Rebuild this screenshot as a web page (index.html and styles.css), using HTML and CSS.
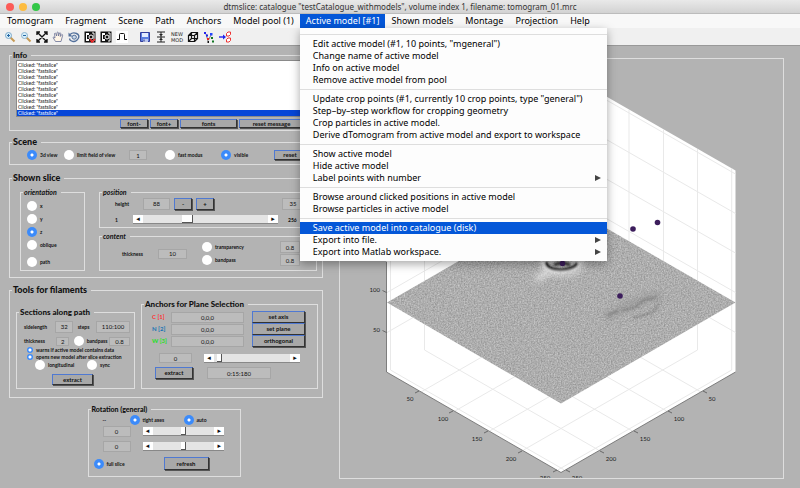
FILE: index.html
```html
<!DOCTYPE html>
<html lang="en">
<head>
<meta charset="utf-8">
<title>dtmslice</title>
<link rel="stylesheet" href="styles.css">
</head>
<body>
<header class="titlebar">
  <span class="lights"><i class="close"></i><i class="minimise"></i><i class="expand"></i></span>
  <h1>dtmslice: catalogue "testCatalogue_withmodels", volume index 1, filename: tomogram_01.mrc</h1>
</header>

<nav class="menubar">
  <button type="button">Tomogram</button>
  <button type="button">Fragment</button>
  <button type="button">Scene</button>
  <button type="button">Path</button>
  <button type="button">Anchors</button>
  <button type="button">Model pool (1)</button>
  <div class="open">
    <button type="button" class="active">Active model [#1]</button>
    <div class="dropdown">
      <hr>
      <button type="button">Edit active model (#1, 10 points, "mgeneral")</button>
      <button type="button">Change name of active model</button>
      <button type="button">Info on active model</button>
      <button type="button">Remove active model from pool</button>
      <hr>
      <button type="button">Update crop points (#1, currently 10 crop points, type "general")</button>
      <button type="button">Step–by–step workflow for cropping geometry</button>
      <button type="button">Crop particles in active model.</button>
      <button type="button">Derive dTomogram from active model and export to workspace</button>
      <hr>
      <button type="button">Show active model</button>
      <button type="button">Hide active model</button>
      <button type="button" class="sub">Label points with number</button>
      <hr>
      <button type="button">Browse around clicked positions in active model</button>
      <button type="button">Browse particles in active model</button>
      <hr>
      <button type="button" class="active">Save active model into catalogue (disk)</button>
      <button type="button" class="sub">Export into file.</button>
      <button type="button" class="sub">Export into Matlab workspace.</button>
    </div>
  </div>
  <button type="button">Shown models</button>
  <button type="button">Montage</button>
  <button type="button">Projection</button>
  <button type="button">Help</button>
</nav>

<div class="toolbar">
  <button type="button" aria-label="Zoom in"><svg viewBox="0 0 12 12"><path d="M6.5 6.5L10.5 10.5" stroke="#c79a54" stroke-width="2"/><circle cx="4.5" cy="4.5" r="3" fill="#d8effa" stroke="#7fa9c9"/><path d="M3 4.5h3M4.500 3v3" stroke="#2568a5"/></svg></button>
  <button type="button" aria-label="Zoom out"><svg viewBox="0 0 12 12"><path d="M6.500 6.500L10.500 10.500" stroke="#c79a54" stroke-width="2"/><circle cx="4.500" cy="4.500" r="3" fill="#d8effa" stroke="#8eb5d0"/><path d="M3 4.500h3" stroke="#2568a5"/></svg></button>
  <button type="button" aria-label="Fit"><svg viewBox="0 0 12 12"><path d="M1 4V1h3M8 1h3v3M11 8v3H8M4 11H1V8M1 1l10 10M11 1L1 11" stroke="#111" stroke-width="1.400"/></svg></button>
  <button type="button" aria-label="Pan"><svg viewBox="0 0 12 12"><path d="M3.500 10.500L1 6.500q.5-1 2 .5L2.500 2.500q.8-.8 1.300 0l.8 2.500L5 1.500q.8-.8 1.300 0L6.500 5l1-3q.8-.7 1.200.2L8.300 5.500l1.500-2q1 0 .8 1L9 10.500z" fill="#fff5e6" stroke="#666f95" stroke-width=".8"/></svg></button>
  <button type="button" aria-label="Rotate"><svg viewBox="0 0 12 12"><path d="M2 3.500Q5 .8 8.500 2.500t1.700 5Q8 11.300 4.500 10.300T2 7.500" stroke="#52709b" stroke-width="1.400"/><path d="M.5 1.500v4h4z" fill="#52709b"/><ellipse cx="6.200" cy="6.200" rx="2.200" ry="2" fill="#c9d7e7" stroke="#52709b"/></svg></button>
  <button type="button" aria-label="Record slice"><svg viewBox="0 0 12 12"><rect x=".5" y=".5" width="11" height="11" fill="#111"/><path d="M2 2v8h3V8H3V4h2V2z" fill="#fff"/><circle cx="7" cy="6" r="2" fill="#111" stroke="#fff"/><path d="M8 2h2v8H8" stroke="#fff"/><path d="M6 8l2 3 3-3" stroke="#e22" stroke-width="1.500"/></svg></button>
  <button type="button" aria-label="Show slice"><svg viewBox="0 0 12 12"><rect x=".5" y=".5" width="11" height="11" fill="#111"/><path d="M2 2v8h3V8H3V4h2V2z" fill="#fff"/><circle cx="7" cy="6" r="2" fill="#111" stroke="#fff"/><path d="M8 2h2v8H8" stroke="#fff"/></svg></button>
  <button type="button" aria-label="Filter"><svg viewBox="0 0 12 12"><path d="M0 0h12v12H0z" fill="#fff"/><path d="M1 8.500h2.500v-5q0-1 1-1h3q1 0 1 1v5H11" stroke="#111"/></svg></button>
  <button type="button" class="apart" aria-label="Save"><svg viewBox="0 0 12 12"><path d="M1.500 1.500h9v9h-9z" fill="#5c7fe0" stroke="#333d9a"/><path d="M3 2h6v4H3z" fill="#e4edff"/><path d="M4 8h5v3H4z" fill="#bcc7ee"/><path d="M5 8.500v2" stroke="#26307d"/></svg></button>
  <button type="button" aria-label="Compress height"><svg viewBox="0 0 12 12"><path d="M2 1h8M2 6h8M2 11h8M6 1v10" stroke="#222"/><path d="M4 3l2 2 2-2zM4 9l2-2 2 2z" fill="#222"/></svg></button>
  <button type="button" class="words">NEW<br>MOD</button>
  <button type="button" aria-label="Box"><svg viewBox="0 0 12 12"><path d="M1.500 4.500h6v6h-6zM4.500 1.500h6v6h-6zM1.500 4.500l3-3M7.500 4.500l3-3M7.500 10.500l3-3M1.500 10.500l3-3" stroke="#111" stroke-width="1.200"/></svg></button>
  <button type="button" aria-label="Points"><svg viewBox="0 0 12 12"><path d="M3 3l2 7M8 4L5.500 9" stroke="#777"/><path d="M1 1h2v2H1zM3 3.500h2v2H3z" fill="#22e"/><path d="M7 2h2.500v2.500H7z" fill="#24f"/><path d="M4 7h2v2H4z" fill="#e22"/><path d="M8 6h2v2H8zM9 9.500h2v2H9z" fill="#172"/><path d="M4.500 10h1.500v2H4.500z" fill="#111"/></svg></button>
  <button type="button" aria-label="Send to boxes"><svg viewBox="0 0 12 12"><path d="M0 6h5" stroke="#22e" stroke-width="1.400"/><path d="M4 3.500L7 6 4 8.500z" fill="#22e"/><path d="M7.500 2.500l1.500-1.500h2.500v2.500L10 5H7.500zM7.500 8.500L9 7h2.500v2.500L10 11H7.500z" fill="#fff" stroke="#e33"/></svg></button>
</div>

<main>
  <div class="controls">
    <fieldset class="info">
      <legend class="medium">Info</legend>
      <select size="9" aria-label="Messages">
        <option>Clicked: "fastslice"</option><option>Clicked: "fastslice"</option><option>Clicked: "fastslice"</option>
        <option>Clicked: "fastslice"</option><option>Clicked: "fastslice"</option><option>Clicked: "fastslice"</option>
        <option>Clicked: "fastslice"</option><option>Clicked: "fastslice"</option><option class="current">Clicked: "fastslice"</option>
      </select>
      <div class="message-actions">
        <button type="button" class="btn">font-</button>
        <button type="button" class="btn">font+</button>
        <button type="button" class="btn">fonts</button>
        <button type="button" class="btn">reset message</button>
      </div>
    </fieldset>

    <fieldset class="scene">
      <legend>Scene</legend>
      <div class="scene-row">
        <label class="pick"><input type="radio" checked>3d view</label>
        <label class="pick"><input type="radio">limit field of view</label>
        <input type="text" class="field" value="1" aria-label="Field of view">
        <label class="pick"><input type="radio">fast modus</label>
        <label class="pick"><input type="radio" checked>visible</label>
        <button type="button" class="btn">reset</button>
      </div>
    </fieldset>

    <fieldset class="slice">
      <legend>Shown slice</legend>
      <div class="slice-grid">
        <fieldset class="orientation">
          <legend class="minor">orientation</legend>
          <label class="pick"><input type="radio" name="axis">x</label>
          <label class="pick"><input type="radio" name="axis">y</label>
          <label class="pick"><input type="radio" name="axis" checked>z</label>
          <label class="pick"><input type="radio" name="axis">oblique</label>
          <label class="pick path"><input type="radio" name="axis">path</label>
        </fieldset>
        <div class="stack">
          <fieldset class="position">
            <legend class="minor">position</legend>
            <div class="height-row">
              <label for="height">height</label>
              <input type="text" class="field" id="height" value="88">
              <button type="button" class="btn">-</button>
              <button type="button" class="btn">+</button>
              <input type="text" class="field" value="35" aria-label="Step">
            </div>
            <div class="range-row">
              <span>1</span>
              <div class="slider"><button type="button" aria-label="Lower">◂</button><input type="range" class="wide" min="0" max="256" value="88" aria-label="Height"><button type="button" aria-label="Higher">▸</button></div>
              <span>256</span>
            </div>
          </fieldset>
          <fieldset class="content">
            <legend class="minor">content</legend>
            <div class="content-row">
              <label for="thick">thickness</label>
              <input type="text" class="field" id="thick" value="10">
              <div class="pair">
                <label class="pick"><input type="radio">transparency</label>
                <label class="pick"><input type="radio">bandpass</label>
              </div>
              <div class="pair">
                <input type="text" class="field" value="0.8" aria-label="Transparency">
                <input type="text" class="field" value="0.8" aria-label="Bandpass">
              </div>
            </div>
          </fieldset>
        </div>
      </div>
    </fieldset>

    <fieldset class="tools">
      <legend>Tools for filaments</legend>
      <div class="tools-grid">
        <fieldset class="sections">
          <legend class="medium">Sections along path</legend>
          <div class="side-row">
            <label for="side">sidelength</label><input type="text" class="field" id="side" value="32">
            <label for="steps">steps</label><input type="text" class="field" id="steps" value="110:100">
          </div>
          <div class="thick-row">
            <label for="pthick">thickness</label><input type="text" class="field" id="pthick" value="2">
            <label class="pick"><input type="radio">bandpass</label><input type="text" class="field" value="0.8" aria-label="Path bandpass">
          </div>
          <label class="pick small"><input type="radio" checked>warns if active model contains data</label>
          <label class="pick small"><input type="radio" checked>opens new model after slice extraction</label>
          <div class="mode-row">
            <label class="pick"><input type="radio">longitudinal</label>
            <label class="pick"><input type="radio">sync</label>
          </div>
          <button type="button" class="btn extract">extract</button>
        </fieldset>
        <fieldset class="anchors">
          <legend class="medium">Anchors for Plane Selection</legend>
          <div class="anchor-row"><label class="red" for="c1">C [1]</label><input type="text" class="field" id="c1" value="0,0,0"><button type="button" class="btn">set axis</button></div>
          <div class="anchor-row"><label class="blue" for="n2">N [2]</label><input type="text" class="field" id="n2" value="0,0,0"><button type="button" class="btn">set plane</button></div>
          <div class="anchor-row"><label class="green" for="w3">W [3]</label><input type="text" class="field" id="w3" value="0,0,0"><button type="button" class="btn">orthogonal</button></div>
          <div class="offset-row">
            <input type="text" class="field" value="0" aria-label="Offset">
            <div class="slider"><button type="button" aria-label="Lower">◂</button><input type="range" value="4" aria-label="Offset position"><button type="button" aria-label="Higher">▸</button></div>
          </div>
          <div class="extract-row">
            <button type="button" class="btn">extract</button>
            <input type="text" class="field" value="0:15:180" aria-label="Angles">
          </div>
        </fieldset>
      </div>
    </fieldset>

    <fieldset class="rotation">
      <legend class="title">Rotation (general)</legend>
      <div class="auto-row">
        <span>--</span>
        <label class="pick"><input type="radio" checked>tight axes</label>
        <label class="pick"><input type="radio" checked>auto</label>
      </div>
      <div class="turn-row">
        <input type="text" class="field" value="0" aria-label="Azimuth">
        <div class="slider"><button type="button" aria-label="Lower">◂</button><input type="range" value="50" aria-label="Azimuth position"><button type="button" aria-label="Higher">▸</button></div>
      </div>
      <div class="turn-row">
        <input type="text" class="field" value="0" aria-label="Elevation">
        <div class="slider"><button type="button" aria-label="Lower">◂</button><input type="range" value="50" aria-label="Elevation position"><button type="button" aria-label="Higher">▸</button></div>
      </div>
      <div class="full-row">
        <label class="pick"><input type="radio" checked>full slice</label>
        <button type="button" class="btn">refresh</button>
      </div>
    </fieldset>
  </div>

  <section class="plot">
    <svg viewBox="340 59 443 419" role="img" aria-label="Tomogram slice in 3D">
      <defs>
        <filter id="grain" x="0" y="0" width="1" height="1" color-interpolation-filters="sRGB">
          <feTurbulence type="fractalNoise" baseFrequency="0.7" numOctaves="2" seed="4"/>
          <feColorMatrix values=".3 0 0 0 .53  .3 0 0 0 .53  .3 0 0 0 .53  0 0 0 0 1"/>
        </filter>
        <filter id="soft" x="-.2" y="-.5" width="1.400" height="2"><feGaussianBlur stdDeviation=".8"/></filter>
        <filter id="softer" x="-.3" y="-.6" width="1.600" height="2.200"><feGaussianBlur stdDeviation="3"/></filter>
        <clipPath id="plane"><path d="M387 302.500L561 202l174.500 100.500L561 403.500z"/></clipPath>
      </defs>
      <path d="M386.500 170.500L561 70.500l174.500 100V372L561 472.500 386.500 372z" fill="#fff"/>
      <g stroke="#e9e9e9" stroke-width="1" fill="none">
        <path d="M527 90v202M492.600 110v202M458.400 129v202M424.500 149v201M390.500 168v202M561 71v201"/>
        <path d="M595 90v202M629 110v202M663.500 129v202M697.500 149v201M731.700 168v202"/>
        <path d="M387 332.500l174-100 174.500 100M387 292.500l174-100 174.500 100M387 253l174-100 174.500 100M387 213.500l174-100 174.500 100M387 174l174-100 174.500 100"/>
        <path d="M527 292l174 100M492.600 311l174 100M458.400 331l174 100M424.500 350l174 100M390.500 370l174 100"/>
        <path d="M595 292L421 392M629 311L455 411M663.500 331l-174 100M697.500 350l-174 100M731.700 370l-174 100"/>
      </g>
      <g clip-path="url(#plane)">
        <rect x="386" y="200" width="350" height="206" filter="url(#grain)"/>
        <g filter="url(#softer)" fill="none">
          <ellipse cx="562" cy="265" rx="20" ry="9" stroke="#fff" stroke-width="3" opacity=".8"/>
          <path d="M548 272l-12 8" stroke="#eee" stroke-width="4"/>
          <path d="M606 318q26-18 56-22" stroke="#888" stroke-width="9" opacity=".4"/>
        </g>
        <g filter="url(#soft)" fill="none">
          <path d="M546 262q1 8 15 8 15-1 16-7" stroke="#050505" stroke-width="2.500"/>
          <path d="M554 265q8-4 16 0" stroke="#333" stroke-width="3"/>
          <path d="M543 262q0 10 18 10 18-1 19-9" stroke="#fff" stroke-width="1.200"/>
          <path d="M622 311l14-4 8-7 12-3M633 318l20-6 6-8M607 315l11-4" stroke="#555" stroke-width="1.500" opacity=".5"/>
        </g>
      </g>
      <path d="M386.500 262V372L561 472.500 735.500 372" fill="none" stroke="#666" stroke-width=".8"/>
      <path d="M386.500 332.500l-4-2M386.500 292.500l-4-2M419 391l-4 2M453 411l-4 2M488 431l-4 2M522 451l-4 2M557 470l-4 2M703 391l4 2M668 411l4 2M634 431l4 2M600 451l4 2M566 470l4 2" stroke="#555" stroke-width=".8"/>
      <g fill="#3c1d5c">
        <circle cx="562.500" cy="263.500" r="2.800"/><circle cx="633" cy="229" r="2.800"/><circle cx="657.500" cy="222.500" r="2.800"/><circle cx="620" cy="296" r="2.800"/>
      </g>
      <g class="ticks">
        <text x="380" y="292" text-anchor="end">100</text><text x="380" y="332" text-anchor="end">50</text>
        <text x="410" y="401" text-anchor="middle">50</text><text x="443" y="421" text-anchor="middle">100</text><text x="477" y="441" text-anchor="middle">150</text><text x="511" y="461" text-anchor="middle">200</text><text x="545" y="480" text-anchor="middle">250</text>
        <text x="712" y="401" text-anchor="middle">50</text><text x="679" y="421" text-anchor="middle">100</text><text x="645" y="441" text-anchor="middle">150</text><text x="611" y="461" text-anchor="middle">200</text><text x="577" y="480" text-anchor="middle">250</text>
      </g>
    </svg>
  </section>
</main>
</body>
</html>
```
FILE: styles.css
```css
* { box-sizing: border-box; }

body {
  margin: 0;
  min-height: 100vh;
  background: #b3b3b3;
  color: #111;
  font: 700 5px/6px Lato, "Open Sans", sans-serif;
  overflow: hidden;
}

button, input, select { font: inherit; color: inherit; margin: 0; padding: 0; border: 0; border-radius: 0; min-width: 0; }

/* window chrome */
.titlebar {
  position: relative;
  height: 14px;
  background: linear-gradient(#e9e9e9, #d2d2d2);
  border-bottom: 1px solid #bcbcbc;
  text-align: center;
}
.titlebar h1 { margin: 0; font: 8px/14px "Noto Sans", sans-serif; color: #333; }
.lights { position: absolute; left: 6px; top: 3px; display: flex; gap: 5px; }
.lights i { width: 8px; height: 8px; border-radius: 50%; }
.close { background: #fc5b57; }
.minimise { background: #fdbc40; }
.expand { background: #33c748; }

.menubar {
  display: flex;
  height: 14px;
  padding-left: 1px;
  background: #f8f8f8;
  font: 9px/14px "Noto Sans", sans-serif;
}
.menubar button { background: none; color: #000; text-align: left; white-space: nowrap; }
.menubar > button, .open > button { padding: 0 6px; height: 14px; }
.menubar .active { background: #0457d8; color: #fff; }
.open { position: relative; }
.dropdown {
  position: absolute;
  z-index: 2;
  left: 0;
  top: 14px;
  width: 307px;
  padding: 3px 0;
  background: #fdfdfd;
  box-shadow: 0 3px 9px rgba(0, 0, 0, .35);
}
.dropdown button { display: block; width: 100%; height: 12px; padding: 0 6px 0 13px; line-height: 12px; }
.dropdown hr { height: 1px; margin: 3px 0; border: 0; background: #dedede; }
.dropdown .sub { display: flex; justify-content: space-between; align-items: center; }
.dropdown .sub::after { content: ""; border: solid transparent; border-width: 3px 0 3px 6px; border-left-color: #444; }

.toolbar {
  display: flex;
  align-items: center;
  gap: 4px;
  height: 18px;
  padding: 0 4px;
  background: #f0f0f0;
  border-bottom: 1px solid #999;
}
.toolbar button { display: block; width: 12px; height: 12px; background: none; }
.toolbar svg { display: block; width: 12px; height: 12px; fill: none; }
.toolbar .apart { margin-left: 7px; }
.toolbar .words { font: 5px/6px "DejaVu Sans", sans-serif; color: #222; }

/* layout */
main {
  display: grid;
  grid-template-columns: 314fr 445fr;
  gap: 16px;
  padding: 4px 16px 9px 9px;
}

/* --inset is the left padding of a group; its legend ignores it */
fieldset { min-width: 0; margin: 0; padding: 0 0 0 var(--inset); border: 1px solid #dedede; }
legend { margin-left: calc(2px - var(--inset)); padding: 0 4px 0 1px; font-size: 9px; line-height: 10px; font-weight: 900; }
legend.medium { font-size: 8px; }
legend.title { font-size: 7px; }
legend.minor { font-size: 7px; font-weight: 700; font-style: italic; }

/* controls */
.btn {
  background: #a8a8a8;
  border: 1px solid;
  border-color: #4f79d2 #333 #333 #4f79d2;
  box-shadow: 1px 1px 0 #555;
  font-size: 6px;
  text-align: center;
  white-space: nowrap;
}
.field { width: 100%; background: #bcbcbc; border: 1px solid #a6a6a6; text-align: center; font-size: 6px; font-weight: 400; }
.pick { display: flex; align-items: center; gap: 3px; white-space: nowrap; }
.pick input { appearance: none; flex: none; width: 10px; height: 10px; border-radius: 50%; background: #fff; }
.pick input:checked { background: radial-gradient(circle, #fff 0 1px, #3c8bfa 2px); }
.pick.small input { width: 6px; height: 6px; }

.slider { display: flex; min-width: 0; height: 9px; background: #e4e4e4; border: solid; border-width: 0 0 1px; border-color: #888; }
.slider button { flex: none; width: 10px; background: #fff; font: 7px/8px "DejaVu Sans", sans-serif; text-align: center; }
.slider input { appearance: none; flex: 1; width: 0; height: 8px; background: none; }
.slider input::-webkit-slider-thumb { appearance: none; width: 5px; height: 8px; background: #fff; border: solid #555; border-width: 0 1px 1px 0; }
.slider .wide::-webkit-slider-thumb { width: 11px; }

/* info */
.info { --inset: 6px; padding-right: 6px; padding-bottom: 2px; }
.info select { display: block; width: 100%; height: 57px; padding: 1px 0; background: #fff; border: 1px solid #8a8a8a; overflow: hidden; }
.info option { height: 6px; min-height: 0; padding: 0 1px; line-height: 6px; }
.info option.current { background: #0646d8; color: #fff; }
.message-actions { display: grid; grid-template-columns: 28px 28px 57px 65px; justify-content: end; gap: 2px; margin: 2px 12px 0 0; }
.message-actions .btn { height: 9px; line-height: 7px; }

.scene { --inset: 17px; margin-top: 6px; padding-top: 3px; padding-bottom: 4px; }
.scene-row { display: grid; grid-template-columns: 37px 65px 36px 56px 53px 32px; height: 10px; }
.scene-row .field { width: 18px; height: 10px; }

.slice { --inset: 10px; margin-top: 8px; padding-top: 4px; padding-right: 5px; padding-bottom: 6px; }
.slice-grid { display: grid; grid-template-columns: 65px 1fr; gap: 14px; align-items: end; }
.orientation { --inset: 6px; padding-top: 2px; padding-bottom: 2px; }
.orientation .pick { height: 13px; }
.orientation .path { margin-top: 4px; }
.stack { display: grid; gap: 3px; }
.position { --inset: 15px; padding-right: 12px; padding-bottom: 3px; }
.height-row { display: grid; grid-template-columns: 24px 27px 18px 18px 1fr 22px; column-gap: 4px; height: 13px; align-items: center; }
.height-row > .field, .height-row > .btn { height: 12px; }
.height-row > :last-child { grid-column: 6; }
.range-row { display: grid; grid-template-columns: 18px 145px 1fr; align-items: center; margin-top: 5px; }
.range-row span:last-child { padding-left: 10px; }
.content { --inset: 22px; padding-right: 12px; padding-bottom: 4px; }
.content-row { display: grid; grid-template-columns: 36px 44px 78px 20px; align-items: center; }
.content-row > .field { width: 29px; height: 10px; }
.pair { display: grid; grid-auto-rows: 12px; gap: 1px; }

.tools { --inset: 6px; margin-top: 7px; padding-top: 4px; padding-right: 4px; padding-bottom: 8px; }
.tools-grid { display: grid; grid-template-columns: 119px 1fr; gap: 6px; align-items: end; }
.sections { --inset: 7px; padding-top: 3px; padding-right: 4px; padding-bottom: 3px; }
.side-row { display: grid; grid-template-columns: 27px 18px 14px 34px; justify-content: space-between; align-items: center; height: 13px; }
.side-row .field { height: 12px; }
.thick-row { display: grid; grid-template-columns: 28px 13px 31px 21px; justify-content: space-between; align-items: center; height: 10px; margin-top: 3px; }
.thick-row .field { height: 9px; }
.pick.small { height: 7px; padding-left: 3px; }
.mode-row { display: grid; grid-template-columns: 52px 1fr; height: 10px; padding-left: 11px; }
.extract { display: block; width: 41px; height: 11px; margin: 4px 0 0 28px; }
.anchors { --inset: 10px; padding-top: 2px; padding-right: 12px; padding-bottom: 9px; }
.anchor-row { display: grid; grid-template-columns: 19px 73px 1fr; align-items: center; font-size: 6px; }
.anchor-row .field { height: 11px; }
.anchor-row .btn { height: 12px; margin-left: 8px; }
.red { color: #f33; }
.blue { color: #1673b4; }
.green { color: #1ee01e; }
.offset-row { display: grid; grid-template-columns: 33px 96px; gap: 12px; margin: 6px 0 4px 7px; align-items: center; }
.offset-row .field { height: 10px; }
.extract-row { display: grid; grid-template-columns: 38px 64px; gap: 14px; margin-left: 3px; align-items: center; }
.extract-row > * { height: 12px; }

.rotation { --inset: 14px; width: 49%; margin: 6px 0 0 25%; padding-top: 1px; padding-right: 16px; padding-bottom: 6px; }
.auto-row { display: grid; grid-template-columns: 27px 54px 1fr; align-items: center; height: 10px; }
.turn-row { display: grid; grid-template-columns: 28px 1fr; gap: 12px; align-items: center; height: 11px; margin-top: 1px; }
.turn-row + .turn-row { margin-top: 4px; }
.turn-row .field { height: 11px; }
.full-row { display: grid; grid-template-columns: 70px 45px; align-items: center; height: 13px; margin: 5px 0 0 -9px; }
.full-row .btn { height: 13px; }

/* plot */
.plot { align-self: start; margin-top: 8px; border: 1px solid #dedede; overflow: hidden; }
.plot svg { display: block; width: 100%; }
.ticks { font: 6px Lato, sans-serif; fill: #222; }
```
